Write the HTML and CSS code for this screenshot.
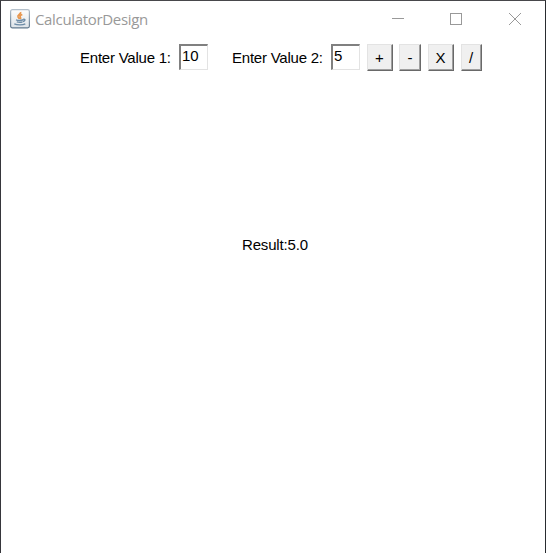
FILE: index.html
```
<!DOCTYPE html>
<html lang="en">
<head>
<meta charset="utf-8">
<title>CalculatorDesign</title>
<link rel="stylesheet" href="styles.css">
</head>
<body>
<div class="window">
  <header class="titlebar">
    <svg class="app-icon" width="20" height="20" viewBox="0 0 20 20">
      <defs><linearGradient id="tile" x1="0" y1="0" x2="0" y2="1"><stop offset="0" stop-color="#fdfdfd"/><stop offset="1" stop-color="#dde3e8"/></linearGradient>
      <linearGradient id="edge" x1="0" y1="0" x2="0" y2="1"><stop offset="0" stop-color="#b3bfca"/><stop offset="1" stop-color="#62798e"/></linearGradient></defs>
      <rect x=".6" y=".6" width="18.8" height="18.3" rx="1.8" fill="url(#tile)" stroke="url(#edge)" stroke-width="1.2"/>
      <path d="M10.6 3C11.500 5 7 6 8 8c.4.9 1.200 1 1.500 2M12.300 5.500C10 6.500 9.500 7.300 10.400 8.200c.5.600.3 1.200-.2 1.800" fill="none" stroke="#e8964e" stroke-width="1.700"/>
      <path d="M6 10.800c2 .7 5 .6 7.300 0M6.800 12.800c2 .6 4 .6 5.700 0M13.300 10.300c2.400-.4 2 1.700-.4 2.300M4.300 14.900c3 1.300 8.500 1.300 11 0" fill="none" stroke="#6c8ba6" stroke-width="1.400"/>
    </svg>
    <h1 class="title">CalculatorDesign</h1>
    <svg class="controls" width="130" height="14" viewBox="0 0 130 14" fill="none" stroke="#999" shape-rendering="crispEdges">
      <path d="M0 6.500h12M58.500 1.500h11v11h-11z"/>
      <path d="M117 1l12 12M129 1l-12 12" shape-rendering="auto"/>
    </svg>
  </header>
  <main>
    <form class="toolbar">
      <label class="label" for="v1">Enter Value 1:</label>
      <input class="field" id="v1" value="10">
      <label class="label second" for="v2">Enter Value 2:</label>
      <input class="field" id="v2" value="5">
      <button class="button wide" type="button">+</button>
      <button class="button" type="button">-</button>
      <button class="button wide" type="button">X</button>
      <button class="button slash" type="button">/</button>
    </form>
    <output class="result">Result:5.0</output>
  </main>
</div>
</body>
</html>
```
FILE: styles.css
```
* { box-sizing: border-box; }
body { margin: 0; background: #fff; overflow: hidden; }
.window {
  height: 553px;
  border: 1px solid;
  border-color: #48484b #292c30 #36363b #36363b;
  border-bottom: 0;
  background: #fff;
  color: #000;
  font: 15px/18px "Liberation Sans", sans-serif;
}
.titlebar { display: flex; height: 38px; padding: 8px 23px 0 9px; }
.app-icon { flex: none; }
.title {
  margin: 0 0 0 5px;
  color: #999;
  font: 15px/20px "Open Sans", "Noto Sans", sans-serif;
  letter-spacing: -.33px;
}
.controls { flex: none; margin: 3px 0 0 auto; }
.toolbar { display: flex; height: 32px; margin: 0; padding: 5px 0 0 79px; }
.label { width: 99px; padding-top: 5px; white-space: nowrap; letter-spacing: -.23px; }
.second { margin-left: 24px; }
.field {
  width: 29px;
  height: 26px;
  margin: 0;
  padding: 0 0 5px 1px;
  border: 2px solid;
  border-color: #808080 #e3e3e3 #e3e3e3 #808080;
  border-right-width: 1px;
  border-bottom-width: 1px;
  border-radius: 0;
  outline: 0;
  background: #fff;
  color: #000;
  font: inherit;
  letter-spacing: -.2px;
}
.button {
  width: 22px;
  height: 27px;
  margin: 0 0 0 6px;
  padding: 1px 0 0;
  border: 1px solid;
  border-color: #e3e3e3 #696969 #696969 #e3e3e3;
  border-radius: 0;
  background: #f0f0f0;
  box-shadow: inset -1px -1px #a0a0a0;
  color: #000;
  font: inherit;
  text-align: center;
}
.wide { width: 26px; margin-left: 7px; padding-right: 1px; }
.slash { width: 21px; margin-left: 7px; padding-right: 1px; }
.result { display: block; margin: 165px 0 0 241px; letter-spacing: -.17px; }
```
